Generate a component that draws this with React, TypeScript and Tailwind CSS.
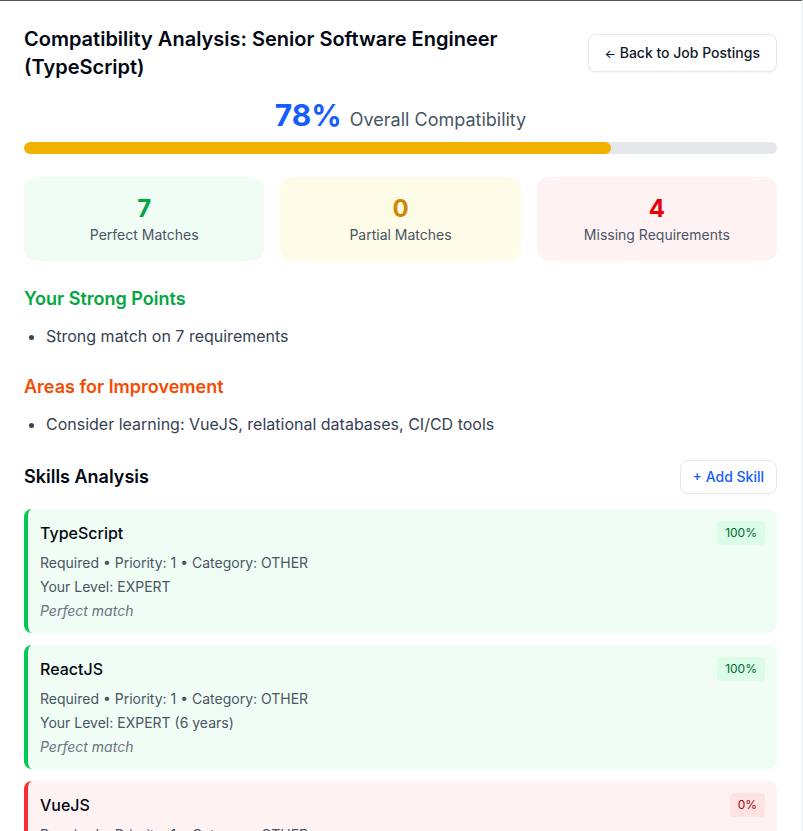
import React from "react";

type Skill = {
  name: string;
  meta: string;
  level: string;
  note: string;
  score: number;
  status: "match" | "missing";
};

const SKILLS: Skill[] = [
  {
    name: "TypeScript",
    meta: "Required • Priority: 1 • Category: OTHER",
    level: "Your Level: EXPERT",
    note: "Perfect match",
    score: 100,
    status: "match",
  },
  {
    name: "ReactJS",
    meta: "Required • Priority: 1 • Category: OTHER",
    level: "Your Level: EXPERT (6 years)",
    note: "Perfect match",
    score: 100,
    status: "match",
  },
  {
    name: "VueJS",
    meta: "Required • Priority: 1 • Category: OTHER",
    level: "Your Level: Not in your profile",
    note: "Missing requirement",
    score: 0,
    status: "missing",
  },
  {
    name: "relational databases",
    meta: "Required • Priority: 2 • Category: OTHER",
    level: "Your Level: Not in your profile",
    note: "Missing requirement",
    score: 0,
    status: "missing",
  },
];

const STATS = [
  { value: 7, label: "Perfect Matches", box: "bg-green-50", num: "text-green-600" },
  { value: 0, label: "Partial Matches", box: "bg-yellow-50", num: "text-yellow-600" },
  { value: 4, label: "Missing Requirements", box: "bg-red-50", num: "text-red-600" },
];

export default function App() {
  const overall = 78;

  return (
    <div
      className="min-h-screen bg-white border-t border-[#555] border-r-2 border-r-gray-100 text-gray-900"
      style={{ fontFamily: "Inter, 'Noto Sans', sans-serif" }}
    >
      <div className="px-6 pt-6 pb-8">
        {/* Header */}
        <div className="flex items-center justify-between gap-4">
          <h1 className="text-xl leading-7 font-semibold text-gray-950 max-w-[480px]">
            Compatibility Analysis: Senior Software Engineer (TypeScript)
          </h1>
          <button
            type="button"
            className="shrink-0 px-4 py-2 text-sm font-medium text-gray-900 bg-white border border-gray-200 rounded-lg shadow-xs"
          >
            <span className="text-xs">←</span> Back to Job Postings
          </button>
        </div>

        {/* Overall score */}
        <div className="mt-4 flex items-baseline justify-center gap-2">
          <span className="text-3xl font-bold text-blue-600">{overall}%</span>
          <span className="text-lg text-gray-600">Overall Compatibility</span>
        </div>
        <div className="mt-2 h-3 w-full rounded-full bg-gray-200 overflow-hidden">
          <div className="h-full rounded-full bg-yellow-500" style={{ width: `${overall}%` }} />
        </div>

        {/* Stats */}
        <div className="mt-[23px] grid grid-cols-3 gap-4">
          {STATS.map((s) => (
            <div key={s.label} className={`${s.box} rounded-xl p-4 text-center`}>
              <div className={`text-2xl font-bold ${s.num}`}>{s.value}</div>
              <div className="text-sm text-gray-600">{s.label}</div>
            </div>
          ))}
        </div>

        {/* Strong points */}
        <h2 className="mt-6 text-lg font-semibold text-green-600">Your Strong Points</h2>
        <ul className="mt-[11px] list-disc pl-[22px] text-gray-700">
          <li>Strong match on 7 requirements</li>
        </ul>

        <h2 className="mt-[25px] text-lg font-semibold text-orange-600">Areas for Improvement</h2>
        <ul className="mt-[11px] list-disc pl-[22px] text-gray-700">
          <li>Consider learning: VueJS, relational databases, CI/CD tools</li>
        </ul>

        {/* Skills */}
        <div className="mt-6 flex items-center justify-between">
          <h2 className="text-lg font-semibold text-gray-950">Skills Analysis</h2>
          <button
            type="button"
            className="px-3 py-1.5 text-sm font-medium text-blue-600 bg-white border border-gray-200 rounded-lg"
          >
            + Add Skill
          </button>
        </div>

        <div className="mt-[15px] space-y-3">
          {SKILLS.map((s) => (
            <div
              key={s.name}
              className={[
                "rounded-lg border-l-4 p-3",
                s.status === "match" ? "bg-green-50 border-green-500" : "bg-red-50 border-red-500",
              ].join(" ")}
            >
              <div className="flex items-start justify-between">
                <div className="font-medium text-gray-950">{s.name}</div>
                <span
                  className={[
                    "px-2 py-1 text-xs rounded",
                    s.status === "match" ? "bg-green-100 text-green-800" : "bg-red-100 text-red-800",
                  ].join(" ")}
                >
                  {s.score}%
                </span>
              </div>
              <div className="mt-2 space-y-1 text-sm text-gray-600">
                <div>{s.meta}</div>
                <div>{s.level}</div>
                <div className="italic text-gray-500">{s.note}</div>
              </div>
            </div>
          ))}
        </div>
      </div>
    </div>
  );
}
